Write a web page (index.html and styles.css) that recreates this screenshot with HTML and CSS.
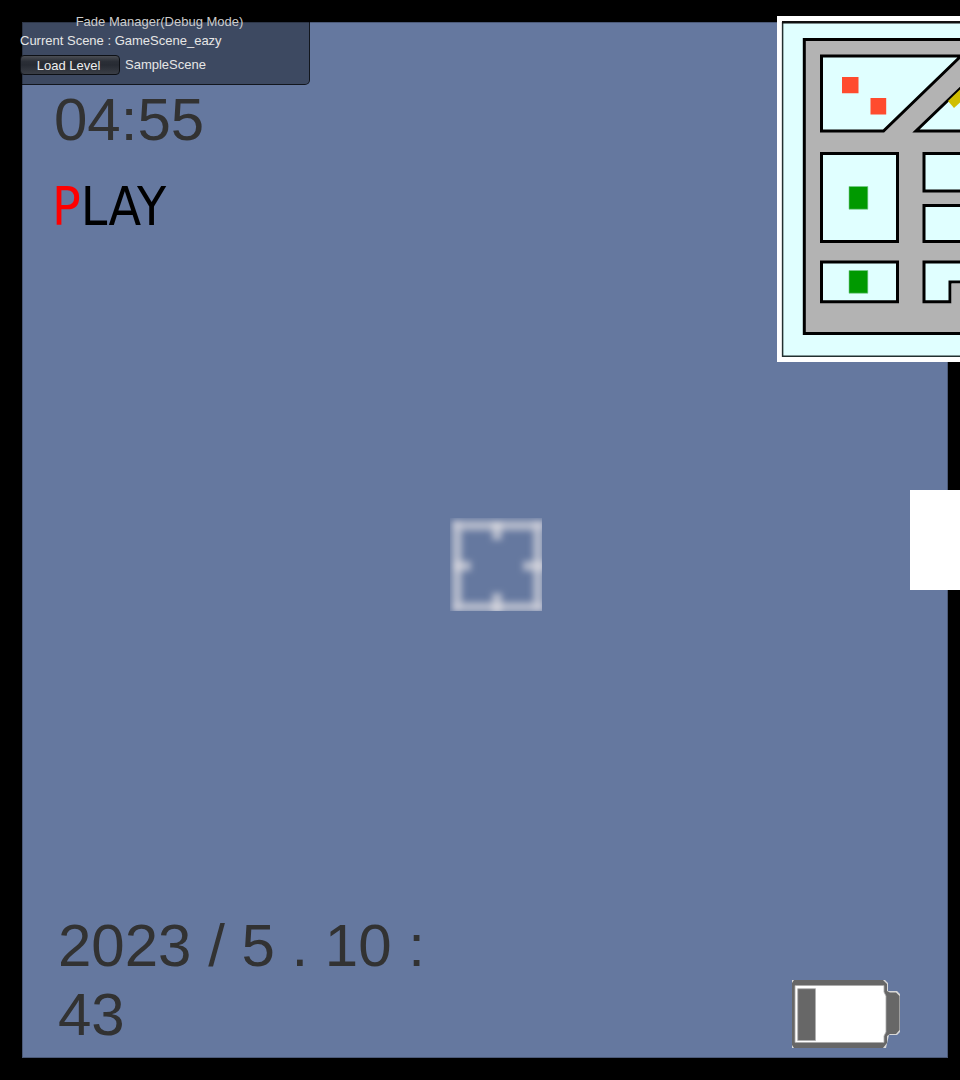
FILE: index.html
```html
<!DOCTYPE html>
<html lang="en">
<head>
<meta charset="utf-8">
<meta name="viewport" content="width=device-width, initial-scale=1">
<title>GameScene_eazy</title>
<link rel="stylesheet" href="styles.css">
</head>
<body>
<main class="screen">
  <div class="scene"></div>

  <div class="aim">
    <svg class="reticle" viewBox="0 0 92 93" aria-hidden="true">
      <defs>
        <filter id="soft" x="-20%" y="-20%" width="140%" height="140%"><feGaussianBlur stdDeviation="3.4"/></filter>
      </defs>
      <g filter="url(#soft)" stroke="#e4e2e6" fill="none">
        <path d="M7 7.500H88V89H7Z" stroke-width="10" opacity=".6"/>
        <path d="M47 4V22M47 75V96M4 48H21M73 48H96" stroke-width="10" opacity=".6"/>
        <path d="M3 7H11M83 7H96M3 89H11M83 89H96" stroke-width="9" opacity=".4"/>
      </g>
    </svg>
  </div>

  <div class="hud">
    <section class="status">
      <div class="debug">
        <h1 class="debug-title">Fade Manager(Debug Mode)</h1>
        <p class="debug-line">Current Scene : GameScene_eazy</p>
        <div class="debug-row">
          <button class="load" type="button">Load Level</button>
          <span>SampleScene</span>
        </div>
      </div>
      <div class="readout timer">04:55</div>
      <div class="play"><span class="play-first">P</span>LAY</div>
    </section>

    <svg class="map" viewBox="777 16 183 346" role="img" aria-label="Map">
      <path fill="#fff" d="M777 16h183v346H777z"/>
      <path fill="#e0ffff" d="M783 22h177v334H783z"/>
      <path fill="none" stroke="#222f2f" stroke-width="1.5" d="M960 356.3H782.6V22"/>
      <path stroke="#111" stroke-width="2.4" d="M782 22.2H960"/>
      <path fill="#b3b3b3" stroke="#000" stroke-width="3" d="M970 39.5H804.3V333.5H970"/>
      <g fill="#e0ffff" stroke="#000" stroke-width="3">
        <path d="M821.5 56H961L883.5 131H821.5Z"/>
        <path d="M966 83L916 131H966"/>
        <path d="M821.5 153.5H897.5V241.5H821.5Z"/>
        <path d="M821.5 262H897.5V301.700H821.5Z"/>
        <path d="M966 153.500H924V191H966"/>
        <path d="M966 205.500H924V241.500H966"/>
        <path d="M966 262H924V301.700H950V282H966"/>
      </g>
      <path fill="#b3b3b3" d="M951.500 283.500h9v20h-9z"/>
      <path fill="#ff4b2e" d="M842 77h16.500v16.300H842zM870.500 98h15.700v16.500h-15.700z"/>
      <path fill="#090" stroke="#76c78b" stroke-width=".6" d="M849 186.500h18.800v22.700H849zM849 270.500h18.800v22.700H849z"/>
      <path fill="#d0be00" d="M948 101L960 89.500V102.500L954 108Z"/>
    </svg>

    <div class="blank"></div>

    <div class="readout date">2023 / 5 . 10 : 43</div>

    <svg class="battery" viewBox="0 0 108 68" role="img" aria-label="Battery low">
      <path fill="#d8d8d8" d="M0 0H93L96 3V11H105L108 14V52L105 55H97L94 68H0Z"/>
      <path fill="#676767" d="M2 0H91L95 4V11L98 12.500H104L107.500 16V50L104 54H98L95 56V63L91 68H2L0 65V3Z"/>
      <path fill="#fff" stroke="#aaa" stroke-width=".8" d="M3 5.500H92V12L94 16V52L92 56V62.500H3Z"/>
      <path fill="#676767" stroke="#b0b0b0" stroke-width=".8" d="M5.700 8.700H23.500V60.500H5.700Z"/>
    </svg>
  </div>
</main>
</body>
</html>
```
FILE: styles.css
```css
* {
  box-sizing: border-box;
}

body {
  margin: 0;
  background: #000;
  font-family: "Liberation Sans", Arial, sans-serif;
}

/* The scene, the reticle and the HUD share one grid cell. */
.screen {
  display: grid;
  min-height: 100vh;
  overflow: hidden;
}

.scene,
.aim,
.hud {
  grid-area: 1 / 1;
}

.scene {
  margin: 22px 12px 22px 22px;
  background: #65789f;
  border: 1px solid #4b5977;
}

.aim {
  display: grid;
  place-items: center;
  padding: 49px 0 0 32px;
}

.reticle {
  width: 92px;
  height: 93px;
  overflow: hidden;
}

.hud {
  display: grid;
  grid-template-columns: 1fr auto;
  grid-template-rows: 1fr auto 1fr;
}

.status {
  grid-area: 1 / 1 / 3 / 2;
  align-self: start;
}

.debug {
  width: 300px;
  height: 75px;
  margin: 10px 0 0 10px;
  padding: 4px 10px 0;
  background: rgba(0, 0, 0, 0.39);
  border: 1px solid rgba(0, 0, 0, 0.7);
  border-top: 0;
  border-left: 0;
  border-radius: 5px;
  color: #e6e6e6;
  font-size: 13px;
  line-height: 16px;
}

.debug-title {
  margin: 0;
  color: #ccc;
  font-size: 13px;
  font-weight: 400;
  text-align: center;
}

.debug-line {
  margin: 3px 0 6px;
}

.debug-row {
  display: flex;
  align-items: center;
  gap: 5px;
  line-height: 18px;
}

.load {
  width: 100px;
  height: 20px;
  padding: 1px 3px 0 0;
  background: linear-gradient(#4b4e54, #2b2f37 30%, #272b33 50%, #3a3e46);
  border: 1px solid #0d1015;
  border-radius: 4px;
  color: #eee;
  font: inherit;
}

.readout {
  color: #323232;
  font-size: 60px;
  line-height: 69px;
}

.timer {
  margin: 0 0 0 54px;
}

.play {
  margin: 21px 0 0 52px;
  color: #000;
  font-family: "Liberation Sans Narrow", "DejaVu Sans Condensed", sans-serif;
  font-size: 53px;
  line-height: 64px;
}

.play-first {
  color: #f00;
}

.map {
  grid-area: 1 / 2;
  width: 183px;
  height: 346px;
  margin-top: 16px;
}

.blank {
  grid-area: 2 / 2;
  justify-self: end;
  width: 50px;
  height: 100px;
  background: #fff;
}

.date {
  grid-area: 3 / 1;
  align-self: end;
  max-width: 384px;
  margin: 0 0 31px 58px;
}

.battery {
  grid-area: 3 / 2;
  place-self: end;
  width: 108px;
  height: 68px;
  margin: 0 60px 32px 0;
}
```
